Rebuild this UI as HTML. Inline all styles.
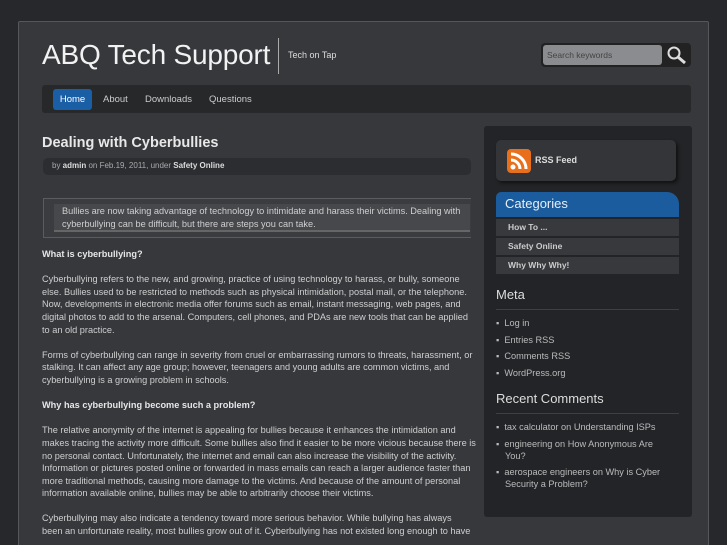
<!DOCTYPE html>
<html><head><style>
*{margin:0;padding:0;box-sizing:border-box}
html,body{width:727px;height:545px;overflow:hidden}
body{background:#26282b;font-family:"Liberation Sans",sans-serif;color:#c8c8c8;position:relative}
#wrap{position:absolute;left:18px;top:21px;width:691px;height:540px;background:#36383c;border:1px solid #55575a;border-radius:2px}
.a{position:absolute}
h1{font-weight:normal;font-size:28px;color:#f2f2f2;left:23px;top:17px;position:absolute;letter-spacing:-0.2px}
.p{font-size:9.2px;line-height:12.6px;color:#cfcfcf}
.p b{color:#e6e6e6}
</style></head><body>
<div id="wrap">
<h1>ABQ Tech Support</h1>
<div class="a" style="left:259px;top:16px;width:1px;height:36px;background:#aaa"></div>
<div class="a" style="left:269px;top:28px;font-size:9px;color:#ddd">Tech on Tap</div>
<div class="a" style="left:522px;top:21px;width:150px;height:24px;background:#222;border-radius:4px"></div>
<div class="a" style="left:524px;top:23px;width:119px;height:20px;background:#8a8c8f;border-radius:3px;font-size:8.5px;color:#444;padding:5px 4px">Search keywords</div>
<svg class="a" style="left:647px;top:23px" width="22" height="20"><circle cx="8" cy="8" r="5.5" fill="none" stroke="#ddd" stroke-width="2"/><line x1="12" y1="12" x2="19" y2="18" stroke="#ddd" stroke-width="3"/></svg>
<div class="a" style="left:23px;top:63px;width:649px;height:28px;background:#26282a;border-radius:3px"></div>
<div class="a" style="left:34px;top:67px;width:39px;height:21px;background:#1a5ea6;border-radius:3px;color:#fff;font-size:9.5px;text-align:center;line-height:21px">Home</div>
<div class="a" style="left:84px;top:72px;font-size:9.5px;color:#ccc">About</div>
<div class="a" style="left:126px;top:72px;font-size:9.5px;color:#ccc">Downloads</div>
<div class="a" style="left:190px;top:72px;font-size:9.5px;color:#ccc">Questions</div>

<div class="a" style="left:23px;top:113px;font-size:14.5px;font-weight:bold;color:#e8e8e8">Dealing with Cyberbullies</div>
<div class="a" style="left:24px;top:136px;width:428px;height:17px;background:#2b2d30;border-radius:5px;font-size:8px;color:#aaa;padding:3px 9px">by <b style="color:#ddd">admin</b> on Feb.19, 2011, under <b style="color:#ddd">Safety Online</b></div>
<div class="a" style="left:24px;top:176px;width:428px;height:40px;border:1px solid #5a5c5f;border-right:none;background:#3a3c40"></div>
<div class="a p" style="left:35px;top:182px;width:416px;height:28px;background:#46484c;padding:1px 8px;border-bottom:2px solid #666">Bullies are now taking advantage of technology to intimidate and harass their victims. Dealing with cyberbullying can be difficult, but there are steps you can take.</div>
<div class="a p" style="left:23px;top:226px;width:434px">
<p style="margin-bottom:12.6px"><b>What is cyberbullying?</b></p>
<p style="margin-bottom:12.6px">Cyberbullying refers to the new, and growing, practice of using technology to harass, or bully, someone else. Bullies used to be restricted to methods such as physical intimidation, postal mail, or the telephone. Now, developments in electronic media offer forums such as email, instant messaging, web pages, and digital photos to add to the arsenal. Computers, cell phones, and PDAs are new tools that can be applied to an old practice.</p>
<p style="margin-bottom:12.6px">Forms of cyberbullying can range in severity from cruel or embarrassing rumors to threats, harassment, or stalking. It can affect any age group; however, teenagers and young adults are common victims, and cyberbullying is a growing problem in schools.</p>
<p style="margin-bottom:12.6px"><b>Why has cyberbullying become such a problem?</b></p>
<p style="margin-bottom:12.6px">The relative anonymity of the internet is appealing for bullies because it enhances the intimidation and makes tracing the activity more difficult. Some bullies also find it easier to be more vicious because there is no personal contact. Unfortunately, the internet and email can also increase the visibility of the activity. Information or pictures posted online or forwarded in mass emails can reach a larger audience faster than more traditional methods, causing more damage to the victims. And because of the amount of personal information available online, bullies may be able to arbitrarily choose their victims.</p>
<p style="white-space:nowrap">Cyberbullying may also indicate a tendency toward more serious behavior. While bullying has always<br>been an unfortunate reality, most bullies grow out of it. Cyberbullying has not existed long enough to have</p>
</div>

<div class="a" style="left:465px;top:104px;width:208px;height:391px;background:#222427;border-radius:3px"></div>
<div class="a" style="left:477px;top:118px;width:180px;height:41px;background:#333538;border-radius:5px;box-shadow:2px 2px 3px #111"></div>
<svg class="a" style="left:488px;top:127px" width="24" height="24"><rect width="24" height="24" rx="4" fill="#e8701c"/><circle cx="6" cy="18" r="2.5" fill="#fff"/><path d="M4 11a9 9 0 0 1 9 9M4 5a15 15 0 0 1 15 15" fill="none" stroke="#fff" stroke-width="3"/></svg>
<div class="a" style="left:516px;top:133px;font-size:9px;font-weight:bold;color:#ddd">RSS Feed</div>
<div class="a" style="left:477px;top:170px;width:183px;height:25px;background:#1a5c9e;border-radius:5px 12px 0 0;color:#e8eef5;font-size:13px;padding:4px 9px">Categories</div>
<div class="a" style="left:477px;top:197px;width:183px;height:17px;background:#37393d;font-size:8.5px;font-weight:bold;color:#ccc;padding:3px 12px">How To ...</div>
<div class="a" style="left:477px;top:216px;width:183px;height:17px;background:#37393d;font-size:8.5px;font-weight:bold;color:#ccc;padding:3px 12px">Safety Online</div>
<div class="a" style="left:477px;top:235px;width:183px;height:17px;background:#37393d;font-size:8.5px;font-weight:bold;color:#ccc;padding:3px 12px">Why Why Why!</div>
<div class="a" style="left:477px;top:265px;font-size:13px;color:#ddd">Meta</div>
<div class="a" style="left:477px;top:287px;width:183px;height:1px;background:#3d3f42"></div>
<div class="a" style="left:477px;top:293px;font-size:9.2px;line-height:16.6px;color:#bbb">
<div>▪ &nbsp;Log in</div><div>▪ &nbsp;Entries RSS</div><div>▪ &nbsp;Comments RSS</div><div>▪ &nbsp;WordPress.org</div></div>
<div class="a" style="left:477px;top:369px;font-size:13px;color:#ddd">Recent Comments</div>
<div class="a" style="left:477px;top:391px;width:183px;height:1px;background:#3d3f42"></div>
<div class="a" style="left:477px;top:399px;width:170px;font-size:9.2px;line-height:12px;color:#bbb">
<div style="margin-bottom:4.5px">▪ &nbsp;tax calculator on Understanding ISPs</div>
<div style="margin-bottom:4.5px;padding-left:9px;text-indent:-9px">▪ &nbsp;engineering on How Anonymous Are You?</div>
<div style="padding-left:9px;text-indent:-9px">▪ &nbsp;aerospace engineers on Why is Cyber Security a Problem?</div></div>
</div>
</body></html>
